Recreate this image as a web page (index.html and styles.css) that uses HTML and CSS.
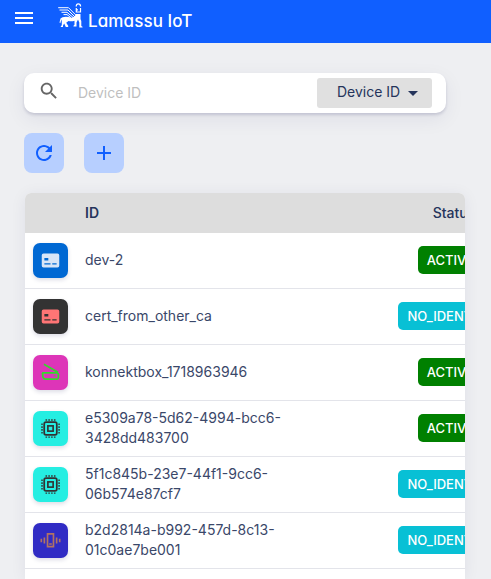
FILE: index.html
```html
<!DOCTYPE html>
<html lang="en">
<head>
<meta charset="utf-8">
<title>Lamassu IoT</title>
<link rel="stylesheet" href="styles.css">
</head>
<body>
<svg class="defs" aria-hidden="true">
  <symbol id="card" viewBox="0 0 24 24"><path fill-rule="evenodd" d="M4 4h16a2 2 0 0 1 2 2v12a2 2 0 0 1-2 2H4a2 2 0 0 1-2-2V6q0-2 2-2zM5 9v3h4.500V9zM5 15v1.700h7V15zM14 15v1.700h5V15z"/></symbol>
  <symbol id="chip" viewBox="0 0 24 24"><g fill="none" stroke="currentColor"><rect x="4.800" y="4.800" width="14.400" height="14.400" rx="2" stroke-width="2"/><rect x="9" y="9" width="6" height="6" stroke-width="1.900"/><path stroke-width="1.800" d="M7.200 1.500v1.600M10.400 1.500v1.600M13.600 1.500v1.600M16.800 1.500v1.600M7.200 21v1.600M10.400 21v1.600M13.600 21v1.600M16.800 21v1.600M1.500 7.200h1.600M1.500 10.400h1.600M1.500 13.600h1.600M1.500 16.800h1.600M21 7.200h1.600M21 10.400h1.600M21 13.600h1.600M21 16.800h1.600"/></g></symbol>
  <symbol id="scanner" viewBox="0 0 24 24"><path fill="none" stroke="currentColor" stroke-width="2" d="M4.500 2.500 20.500 11.800M2.500 12.500h16.500q2 0 2 2v3q0 2-2 2H6q-2 0-2.600-2L2.800 12.500"/><path fill="none" stroke="currentColor" stroke-width="1.300" d="M15.500 16h2.500"/></symbol>
  <symbol id="vibrate" viewBox="0 0 24 24"><path fill="none" stroke="currentColor" stroke-width="1.900" d="M8.600 4.500h6.800v14.500H8.600zM10.500 16h3M5 8.500v7M19 8.500v7M1.500 10v4M22.500 10v4"/></symbol>
</svg>
<header class="topbar">
  <svg class="menu" viewBox="0 0 24 24"><path d="M3 18h18v-2H3v2zm0-5h18v-2H3v2zm0-7v2h18V6H3z"/></svg>
  <svg class="beast" viewBox="0 0 26 25">
    <path fill="none" stroke="currentColor" stroke-width="1" d="M.2 4.700H10.500l7.500 7.500M1.500 7H10l7 7M3.500 9.300h5.500l6.500 5.500M5.500 11.600H9l4 3.200"/>
    <path d="M4.500 14.200q4-1.200 9 .6l3-1.300 1.500-2.500h4.500v5l.8 2v5l1.200.8v.8H21.300v-5l-1.300-3-1.500 3v4h-3v-.8l1-1v-4q-3 1-6 .2L8.200 19.700l2 3v1.300H7.800L6.200 20.500l-1.200 2V24H2.800v-.8l1-1v-3.500l-.3-2.500-1.200 4-.8-.6L2.500 15.500z"/>
    <path fill="none" stroke="currentColor" stroke-width="1.200" d="M18.200 3.500q.2-2.600 2-2.600 2.300 0 2.400 2.600M18 6.800h2M18.300 5v4.500M22.500 5v4.500M18.500 9h4"/>
  </svg>
  <span class="brand">Lamassu IoT</span>
</header>
<main class="page">
  <div class="search">
    <svg class="magnifier" viewBox="0 0 24 24"><path d="M15.500 14h-.79l-.28-.27C15.410 12.590 16 11.110 16 9.500 16 5.910 13.090 3 9.500 3S3 5.910 3 9.500 5.910 16 9.500 16c1.610 0 3.090-.59 4.230-1.570l.27.28v.79l5 4.990L20.490 19l-4.990-5zm-6 0C7.010 14 5 11.990 5 9.500S7.010 5 9.500 5 14 7.010 14 9.500 11.990 14 9.500 14z"/></svg>
    <span class="placeholder">Device ID</span>
    <div class="select">Device ID<i class="caret"></i></div>
  </div>
  <div class="actions">
    <div class="action"><svg viewBox="0 0 24 24"><path d="M17.650 6.350C16.200 4.900 14.210 4 12 4c-4.420 0-7.990 3.580-7.990 8s3.570 8 7.990 8c3.730 0 6.840-2.550 7.730-6h-2.080c-.82 2.330-3.040 4-5.650 4-3.310 0-6-2.690-6-6s2.690-6 6-6c1.660 0 3.140.69 4.220 1.780L13 11h7V4l-2.350 2.350z"/></svg></div>
    <div class="action"><svg viewBox="0 0 24 24"><path d="M19 13h-6v6h-2v-6H5v-2h6V5h2v6h6v2z"/></svg></div>
  </div>
  <div class="shadow"><div class="table">
    <div class="row head"><span></span><span>ID</span><span class="status">Status</span></div>
    <div class="row"><div class="tile blue"><svg><use href="#card"/></svg></div><span>dev-2</span><div class="status"><b class="badge active">ACTIVE</b></div></div>
    <div class="row"><div class="tile dark"><svg><use href="#card"/></svg></div><span>cert_from_other_ca</span><div class="status"><b class="badge">NO_IDENTITY</b></div></div>
    <div class="row"><div class="tile pink"><svg><use href="#scanner"/></svg></div><span>konnektbox_1718963946</span><div class="status"><b class="badge active">ACTIVE</b></div></div>
    <div class="row"><div class="tile aqua"><svg><use href="#chip"/></svg></div><span>e5309a78-5d62-4994-bcc6-<br>3428dd483700</span><div class="status"><b class="badge active">ACTIVE</b></div></div>
    <div class="row"><div class="tile aqua"><svg><use href="#chip"/></svg></div><span>5f1c845b-23e7-44f1-9cc6-<br>06b574e87cf7</span><div class="status"><b class="badge">NO_IDENTITY</b></div></div>
    <div class="row"><div class="tile indigo"><svg><use href="#vibrate"/></svg></div><span>b2d2814a-b992-457d-8c13-<br>01c0ae7be001</span><div class="status"><b class="badge">NO_IDENTITY</b></div></div>
    <div class="row last"></div>
  </div></div>
</main>
</body>
</html>
```
FILE: styles.css
```css
* { box-sizing: border-box; }
body {
  margin: 0;
  height: 579px;
  overflow: hidden;
  background: #eeeff2;
  color: #25345b;
  font: 400 14px/20px Inter, sans-serif;
}
svg { display: block; fill: currentColor; flex: none; }
.defs { display: none; }
.topbar {
  height: 43px;
  background: #105fff;
  color: #fff;
  display: flex;
  align-items: flex-start;
  padding: 3px 0 0 12px;
}
.menu { width: 24px; height: 24px; margin-top: 3px; }
.beast { width: 26px; height: 25px; margin-left: 22px; }
.brand {
  margin: 8px 0 0 4px;
  font-size: 17px;
  font-weight: 500;
  letter-spacing: .1px;
  white-space: nowrap;
  font-feature-settings: "cv11";
}
.page { padding: 30px 25px 0 24px; }
.search {
  width: 422px;
  height: 40px;
  border-radius: 10px;
  background: #fff;
  box-shadow: 0 2px 3px rgba(30, 30, 90, .16), 0 6px 20px rgba(30, 30, 90, .07);
  display: flex;
  align-items: center;
  padding: 0 14px;
}
.magnifier { width: 22px; height: 22px; color: #666; margin-bottom: 5px; }
.placeholder { margin-left: 18px; color: #bfbfbf; flex: 1; }
.select {
  width: 115px;
  height: 30px;
  border-radius: 3px;
  background: #e0e0e0;
  display: flex;
  align-items: center;
  padding: 0 0 2px 20px;
}
.caret { margin: 3px 0 0 8px; border: 5px solid transparent; border-top-color: currentColor; border-bottom: 0; }
.actions { display: flex; gap: 20px; margin-top: 20px; }
.action {
  width: 40px;
  height: 40px;
  border-radius: 8px;
  background: #b7cfff;
  color: #105fff;
  display: grid;
  place-items: center;
}
.action svg { width: 24px; height: 24px; }
.shadow {
  margin: 20px 0 0 1px;
  width: 440px;
  border-radius: 6px;
  box-shadow: 0 2px 16px rgba(30, 30, 90, .07);
}
.table { border-radius: 6px 6px 0 0; background: #fff; overflow: hidden; }
.row {
  width: 520px;
  height: 56px;
  border-bottom: 1px solid #e3e4ea;
  display: grid;
  grid-template-columns: 52px 288px 155px;
  align-items: center;
  padding: 0 0 1px 8px;
  color: #3a4769;
}
.head { height: 40px; padding-bottom: 0; background: #ddd; border: 0; font-weight: 600; color: #25345b; }
.last { height: 10px; border: 0; }
.status { text-align: center; }
.head .status { padding-left: 7px; font-weight: 500; }
.tile {
  width: 35px;
  height: 35px;
  border-radius: 7px;
  display: grid;
  place-items: center;
  box-shadow: 0 2px 4px rgba(30, 30, 90, .15);
}
.tile svg { width: 21px; height: 21px; }
.blue { background: #0068d3; color: #d8e5f7; }
.dark { background: #333; color: #ff7575; }
.pink { background: #dd35b8; color: #35d82c; }
.aqua { background: #25eee2; color: #333; }
.indigo { background: #302bc4; color: #b17363; }
.badge {
  display: flex;
  width: fit-content;
  margin: 0 auto;
  align-items: center;
  height: 28px;
  padding: 0 9px;
  border-radius: 5px;
  background: #08c0d5;
  color: #fff;
  font-weight: 500;
  font-size: 13px;
}
.active { background: #008000; }
```
